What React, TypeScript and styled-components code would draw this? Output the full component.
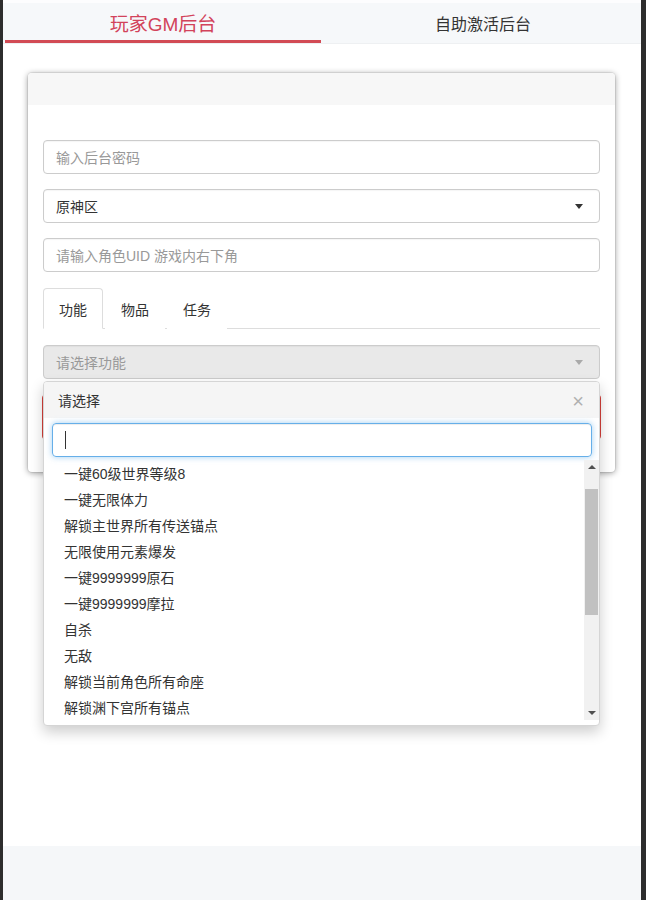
import React from 'react';
import styled, { createGlobalStyle } from 'styled-components';

const GlobalStyle = createGlobalStyle`
   html, body {
      margin: 0;
      padding: 0;
      background: #fff;
   }
   * {
      box-sizing: border-box;
   }
   body {
      font-family: "Liberation Sans", "Noto Sans CJK SC", sans-serif;
      color: #333;
   }
`;

const Frame = styled.div`
   height: 900px;
   border-left: 3px solid #2d2d2d;
   border-right: 5px solid #2d2d2d;
   display: flex;
   flex-direction: column;
   background: #fff;
`;

const Nav = styled.nav`
   display: flex;
   height: 44px;
   padding: 0 0 0 2px;
   background: #f6f8fa;
   border-top: 3px solid #fdfdfe;
   border-bottom: 1px solid #eef0f2;
`;

const NavTab = styled.div<{ active?: boolean }>`
   flex: 1;
   display: flex;
   align-items: center;
   justify-content: center;
   font-size: ${(p) => (p.active ? '19px' : '16px')};
   color: ${(p) => (p.active ? '#d2435b' : '#333')};
   border-bottom: 3px solid ${(p) => (p.active ? '#d24b55' : 'transparent')};
   padding-top: 2px;
   margin-right: ${(p) => (p.active ? '4px' : '0')};
`;

const Main = styled.main`
   flex: 1;
   padding: 29px 26px 0 25px;
`;

const Card = styled.section`
   position: relative;
   background: #fff;
   border-radius: 4px;
   box-shadow: 0 0 0 1px rgba(0, 0, 0, 0.06), 0 1px 6px rgba(0, 0, 0, 0.4);
`;

const CardHeader = styled.header`
   height: 32px;
   background: #f7f7f7;
   border-radius: 4px 4px 0 0;
`;

const CardBody = styled.div`
   padding: 35px 15px 32px;
   display: flex;
   flex-direction: column;
   gap: 15px;
`;

const Field = styled.div<{ disabled?: boolean }>`
   position: relative;
   height: 34px;
   display: flex;
   align-items: center;
   padding: 0 12px;
   border: 1px solid #ccc;
   border-radius: 4px;
   font-size: 14px;
   background: ${(p) => (p.disabled ? '#e9e9e9' : '#fff')};
   box-shadow: inset 0 1px 1px rgba(0, 0, 0, 0.04);
`;

const Placeholder = styled.span`
   color: #999;
`;

const Value = styled.span`
   color: #333;
`;

const Caret = styled.span<{ muted?: boolean }>`
   margin-left: auto;
   margin-right: 4px;
   width: 0;
   height: 0;
   border-left: 4px solid transparent;
   border-right: 4px solid transparent;
   border-top: 5px solid ${(p) => (p.muted ? '#aaa' : '#333')};
`;

const Tabs = styled.div`
   display: flex;
   gap: 2px;
   height: 41px;
   border-bottom: 1px solid #ddd;
   margin: 1px 0 1px;
`;

const Tab = styled.div<{ active?: boolean }>`
   padding: 0 15px;
   display: flex;
   align-items: center;
   font-size: 14px;
   color: #333;
   border: 1px solid ${(p) => (p.active ? '#ddd' : 'transparent')};
   border-bottom-color: ${(p) => (p.active ? '#fff' : 'transparent')};
   border-radius: 4px 4px 0 0;
   margin-bottom: -1px;
   background: #fff;
`;

const SelectWrap = styled.div`
   position: relative;
`;

const SubmitButton = styled.button`
   height: 46px;
   margin: 0 -1px;
   border: 1px solid #d43f3a;
   border-radius: 4px;
   background: #d9534f;
   color: #fff;
   font-size: 16px;
   font-family: inherit;
`;

const Dropdown = styled.div`
   position: absolute;
   top: 36px;
   left: 0;
   right: 0;
   z-index: 10;
   background: #fff;
   border: 1px solid #d5d5d5;
   border-radius: 4px;
   box-shadow: 0 6px 14px rgba(0, 0, 0, 0.2);
   overflow: hidden;
`;

const DropHeader = styled.div`
   height: 36px;
   display: flex;
   align-items: center;
   justify-content: space-between;
   padding: 0 15px 0 14px;
   background: #f5f5f5;
   font-size: 14px;
   color: #333;
`;

const Close = styled.span`
   font-size: 20px;
   color: #b0b0b0;
   line-height: 1;
   margin-top: 1px;
`;

const SearchBox = styled.div`
   padding: 5px 7px 3px 8px;
   background: #fff;
`;

const SearchInput = styled.div`
   height: 34px;
   border: 1px solid #66afe9;
   border-radius: 4px;
   box-shadow: inset 0 1px 1px rgba(0, 0, 0, 0.075), 0 0 6px rgba(102, 175, 233, 0.6);
   display: flex;
   align-items: center;
   padding-left: 12px;
`;

const Cursor = styled.span`
   width: 1px;
   height: 18px;
   background: #333;
`;

const ListArea = styled.div`
   display: flex;
   height: 260px;
   margin-bottom: 5px;
`;

const List = styled.ul`
   flex: 1;
   list-style: none;
   margin: 0;
   padding: 0;
   overflow: hidden;
`;

const Item = styled.li`
   height: 26px;
   display: flex;
   align-items: center;
   padding-left: 20px;
   font-size: 14px;
   color: #333;
   white-space: nowrap;
`;

const ScrollBar = styled.div`
   width: 15px;
   background: #f1f1f1;
   display: flex;
   flex-direction: column;
   align-items: center;
`;

const Arrow = styled.span<{ up?: boolean }>`
   height: 14px;
   display: flex;
   align-items: center;
   justify-content: center;
   width: 100%;

   &::after {
      content: '';
      border-left: 4px solid transparent;
      border-right: 4px solid transparent;
      ${(p) => (p.up ? 'border-bottom: 4px solid #505050;' : 'border-top: 4px solid #505050;')}
   }
`;

const Track = styled.div`
   flex: 1;
   width: 100%;
   padding: 15px 1px 0;
`;

const Thumb = styled.div`
   height: 126px;
   background: #c1c1c1;
`;

const Footer = styled.footer`
   height: 54px;
   background: #f5f7f9;
`;

const items = [
   '一键60级世界等级8',
   '一键无限体力',
   '解锁主世界所有传送锚点',
   '无限使用元素爆发',
   '一键9999999原石',
   '一键9999999摩拉',
   '自杀',
   '无敌',
   '解锁当前角色所有命座',
   '解锁渊下宫所有锚点',
];

const App: React.FC = () => {
   return (
      <>
         <GlobalStyle />
         <Frame>
            <Nav>
               <NavTab active>玩家GM后台</NavTab>
               <NavTab>自助激活后台</NavTab>
            </Nav>
            <Main>
               <Card>
                  <CardHeader />
                  <CardBody>
                     <Field>
                        <Placeholder>输入后台密码</Placeholder>
                     </Field>
                     <Field>
                        <Value>原神区</Value>
                        <Caret />
                     </Field>
                     <Field>
                        <Placeholder>请输入角色UID 游戏内右下角</Placeholder>
                     </Field>
                     <Tabs>
                        <Tab active>功能</Tab>
                        <Tab>物品</Tab>
                        <Tab>任务</Tab>
                     </Tabs>
                     <SelectWrap>
                        <Field disabled>
                           <Placeholder>请选择功能</Placeholder>
                           <Caret muted />
                        </Field>
                        <Dropdown>
                           <DropHeader>
                              <span>请选择</span>
                              <Close>×</Close>
                           </DropHeader>
                           <SearchBox>
                              <SearchInput>
                                 <Cursor />
                              </SearchInput>
                           </SearchBox>
                           <ListArea>
                              <List>
                                 {items.map((item) => (
                                    <Item key={item}>{item}</Item>
                                 ))}
                              </List>
                              <ScrollBar>
                                 <Arrow up />
                                 <Track>
                                    <Thumb />
                                 </Track>
                                 <Arrow />
                              </ScrollBar>
                           </ListArea>
                        </Dropdown>
                     </SelectWrap>
                     <SubmitButton>提交</SubmitButton>
                  </CardBody>
               </Card>
            </Main>
            <Footer />
         </Frame>
      </>
   );
};

export default App;
